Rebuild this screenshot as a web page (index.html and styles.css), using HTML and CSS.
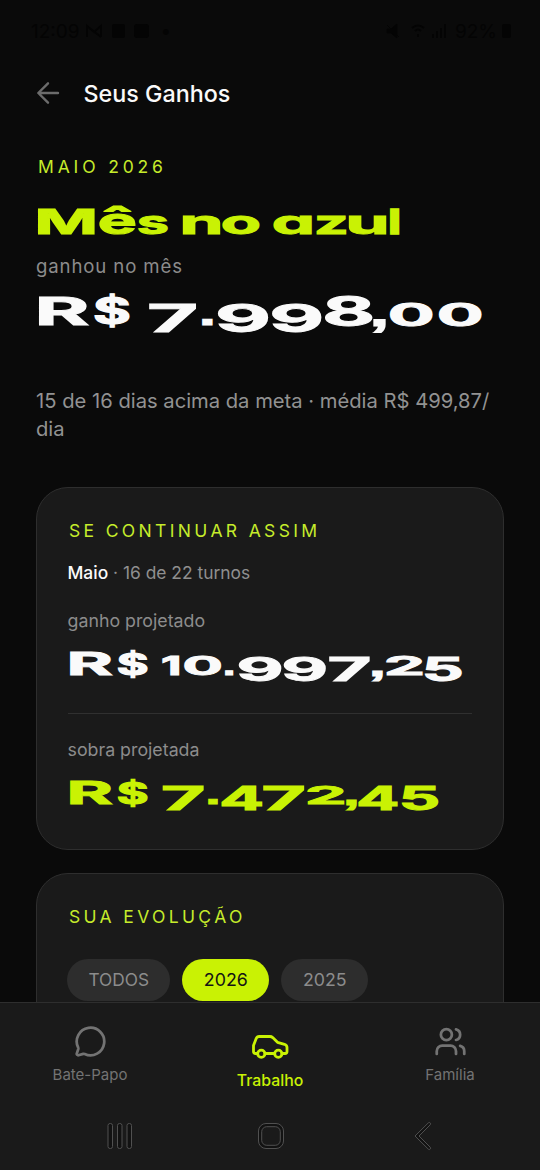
FILE: index.html
```html
<!DOCTYPE html>
<html lang="pt-BR">
<head>
<meta charset="utf-8">
<title>Seus Ganhos</title>
<link rel="stylesheet" href="styles.css">
</head>
<body>
<div class="app">
  <main class="content">
    <div class="status">
      <div class="status-group"><span>12:09</span>
        <svg width="66" height="16" viewBox="0 0 66 16"><path d="M2 14V3l7 6 7-6v11M2 3l14 11" fill="none" stroke="currentColor" stroke-width="2"/><rect x="27" y="1" width="13" height="14" rx="2"/><rect x="49" y="1" width="15" height="14" rx="3"/></svg>
        <span class="status-dot">•</span></div>
      <div class="status-group">
        <svg width="64" height="16" viewBox="0 0 64 16"><path d="M1 6h4l6-5v14l-6-5H1zM1 2l12 12" stroke="currentColor"/><path d="M26 5q6-5 12 0M29 8q3-3 6 0M32 11v3" fill="none" stroke="currentColor" stroke-width="2"/><path d="M46 11h2v4h-2zM50 8h2v7h-2zM54 5h2v10h-2zM58 1h2v14h-2z"/></svg>
        <span>92%</span>
        <svg width="9" height="14" viewBox="0 0 9 14"><rect width="9" height="14" rx="2"/></svg></div>
    </div>
    <header class="header">
      <svg class="back" width="24" height="24" viewBox="0 0 24 24"><path d="M22 12H2.500M12 2.300L2.300 12l9.700 9.700"/></svg>
      <h1>Seus Ganhos</h1>
    </header>
    <section class="summary">
      <p class="eyebrow first">MAIO 2026</p>
      <svg class="wide title" data-row="title" width="468" height="38"></svg>
      <p class="caption">ganhou no mês</p>
      <svg class="wide amount" data-row="amount" width="468" height="50"></svg>
      <p class="detail">15 de 16 dias acima da meta · média R$ 499,87/<br>dia</p>
    </section>
    <section class="card projection">
      <p class="eyebrow">SE CONTINUAR ASSIM</p>
      <p class="shifts"><b>Maio</b> · 16 de 22 turnos</p>
      <p class="label gain">ganho projetado</p>
      <svg class="wide figure" data-row="gain" width="404" height="40"></svg>
      <hr>
      <p class="label">sobra projetada</p>
      <svg class="wide figure lime" data-row="surplus" width="404" height="40"></svg>
    </section>
    <section class="card evolution">
      <p class="eyebrow">SUA EVOLUÇÃO</p>
      <div class="pills"><span class="pill todos">TODOS</span><span class="pill active">2026</span><span class="pill">2025</span></div>
    </section>
  </main>
  <nav class="bottom">
    <div class="tabs">
      <div class="tab"><svg width="33" height="33" viewBox="0 0 24 24"><path d="M2.992 16.342a2 2 0 0 1 .094 1.167l-1.065 3.29a1 1 0 0 0 1.236 1.168l3.413-.998a2 2 0 0 1 1.099.092 10 10 0 1 0-4.777-4.719"/></svg><span>Bate-Papo</span></div>
      <div class="tab on"><svg width="38" height="26" viewBox="0 0 38 26"><path d="M6.500 19.500H4.500Q2.500 19.500 2.500 17.500V11.500L5.200 4.500Q6 2.500 8.200 2.500H19Q20.500 2.500 21.700 3.600L26.500 8.300L33.500 10.300Q36 11.200 36 13.500V17.500Q36 19.500 34 19.500H31M14 19.500H23.500"/><circle cx="10.300" cy="19.700" r="3.600"/><circle cx="27.300" cy="19.700" r="3.600"/></svg><span>Trabalho</span></div>
      <div class="tab"><svg width="33" height="33" viewBox="0 0 24 24"><path d="M16 21v-2a4 4 0 0 0-4-4H6a4 4 0 0 0-4 4v2M22 21v-2a4 4 0 0 0-3-3.870M16 3.130a4 4 0 0 1 0 7.750"/><circle cx="9" cy="7" r="4"/></svg><span>Família</span></div>
    </div>
    <div class="system">
      <svg width="26" height="28" viewBox="0 0 26 28"><rect x="1" y="1.500" width="4.500" height="25" rx="2"/><rect x="10.500" y="1.500" width="4.500" height="25" rx="2"/><rect x="20" y="1.500" width="4.500" height="25" rx="2"/></svg>
      <svg width="28" height="28" viewBox="0 0 28 28"><rect x="1.500" y="1.500" width="25" height="25" rx="7.500"/><rect class="inner" x="4.700" y="4.700" width="18.600" height="18.600" rx="5"/></svg>
      <svg width="20" height="30" viewBox="0 0 20 30"><path d="M15.300 1.900L2 15l13.300 13.100q1 .9 1.900 0t0-1.900L6 15L17.200 3.800q.9-1 0-1.900t-1.900 0z"/></svg>
    </div>
  </nav>
</div>
<script src="wide.js"></script>
</body>
</html>
```
FILE: styles.css
```css
* { box-sizing: border-box; }
body { margin: 0; background: #0a0a0a; color: #fafafa; font-family: Inter, "Open Sans", sans-serif; }
p, h1, hr { margin: 0; }
svg { display: block; flex: none; }
.app { width: 540px; height: 1170px; display: flex; flex-direction: column; overflow: hidden; }
.content { height: 1002px; overflow: hidden; padding: 0 36px; flex: none; }
.status { height: 62px; margin: 0 -8px; display: flex; justify-content: space-between; align-items: center; color: #040404; font-size: 19px; padding: 0 1px 0 3px; }
.status svg { fill: currentColor; }
.status-group { display: flex; align-items: center; gap: 5px; }
.status-dot { margin-left: 5px; }
.header { height: 62px; display: flex; align-items: center; gap: 23.5px; }
.header h1 { font-size: 23.3px; font-weight: 500; line-height: 30px; padding-top: 1px; }
.back { fill: none; stroke: #6c6c6c; stroke-width: 2.4; stroke-linecap: round; stroke-linejoin: round; }
.eyebrow { color: #c6ec2b; font-size: 17.5px; line-height: 22px; letter-spacing: 3.35px; padding: 1px 0 0 1px; white-space: nowrap; }
.eyebrow.first { margin-top: 32px; padding: 0 0 0 2px; letter-spacing: 3.85px; }
.wide { fill: #fafafa; stroke: #fafafa; overflow: visible; }
.wide text { font: 700 100px Inter, sans-serif; stroke-width: 1.6px; vector-effect: non-scaling-stroke; }
.wide .point { font-family: "Liberation Sans", sans-serif; }
.title { margin-top: 24px; fill: #c9f204; stroke: #c9f204; }
.caption { margin-top: 14px; font-size: 18.6px; line-height: 24px; letter-spacing: .88px; color: #8c8c8c; }
.amount { margin-top: 10px; }
.detail { margin-top: 49px; font-size: 20.2px; line-height: 27.5px; color: #929292; white-space: nowrap; }
.card { background: #1a1a1a; border: 1px solid #2e2e2e; border-radius: 32px; padding: 31px 31px 0; }
.projection { margin-top: 45px; height: 362.5px; }
.evolution { margin-top: 23.5px; height: 300px; }
.shifts { margin: 19px 0 0 -.5px; font-size: 17.4px; line-height: 24px; color: #8f8f8f; }
.shifts b { font-weight: 500; color: #fafafa; }
.label { margin: 24px 0 0 -.5px; font-size: 17.8px; line-height: 24px; color: #8c8c8c; }
.figure { margin-top: 13px; }
.lime { fill: #c9f204; stroke: #c9f204; margin-top: 14px; }
hr { border: 0; height: 1px; background: #303030; margin-top: 27px; }
.pills { display: flex; gap: 12px; margin: 30.5px 0 0 -.7px; }
.pill { width: 87px; height: 42px; line-height: 42px; text-align: center; border-radius: 21px; background: #2d2d2d; color: #8c8c8c; font-size: 17.8px; }
.todos { width: 103px; font-size: 17.3px; }
.active { background: #c9f204; color: #141414; }
.bottom { height: 168px; background: #1a1a1a; border-top: 1px solid #2e2e2e; }
.tabs { display: flex; height: 100px; }
.tab { width: 180px; display: flex; flex-direction: column; align-items: center; padding-top: 22px; gap: 6px; color: #737373; font-size: 15px; line-height: 21px; }
.tab svg { fill: none; stroke: currentColor; stroke-width: 2; stroke-linecap: round; stroke-linejoin: round; }
.tab.on { color: #c9f204; padding-top: 31px; gap: 10px; font-size: 15.8px; font-weight: 500; }
.tab.on svg { stroke-width: 2.8; }
.system { display: flex; align-items: center; height: 66px; padding-left: 107px; }
.system svg { fill: #121212; stroke: #505050; stroke-width: 1; }
.system .inner { fill: #1a1a1a; }
.system svg:nth-child(2) { margin-left: 124px; }
.system svg:nth-child(3) { margin-left: 128px; }
```
FILE: wide.js
```js
// Extended display lettering: every glyph is stretched to its own box
// [character, left, right, top, bottom]; a null entry is a word space.
const rows = {
  title: [['M',2,59,6,32.5],['ê',63,99.5,2,33],['s',102,132,12.5,33],null,['n',147,184,12.5,32.5],['o',186,223.5,12.5,33],null,['a',237,276,12.5,33],['z',280,310,13,32.5],['u',313,350,13,33],['l',354,363.5,5.500,32.5]],
  amount: [['R',3,53,8,37.5],['$',58,94,5,41],null,['7',113,160,15,44.5],['.',166,177,30,37.5],['9',181,232.5,14,45],['9',235,285.5,14,45],['8',288,336.5,7,39.5],[',',337,350,30,45],['0',353,397,13.500,39],['0',402,446,13.500,39]],
  gain: [['R',2,44.5,5,30],['$',49.5,80,3,33],null,['1',94,111.5,10,30],['0',115.5,153.5,9.500,30.5],['.',157,165.5,24,30],['9',170,213.5,9.500,36],['9',215,258,9.500,36],['7',261,301.5,10,36],[',',304,315,24,36],['2',318,354.5,9.500,30],['5',357,393.500,10,36.5]],
  surplus: [['R',2,44.5,4,29],['$',49.5,80,2,32],null,['7',94.5,135.5,9.500,35],['.',140,150,22.500,29],['4',153.5,194.5,9.500,35],['7',195,236,9.500,35],['2',239,276,9,29],[',',278,289,23,35],['4',290.500,330,9.500,35],['5',334,370,9.500,35.5]]
};
const NS = 'http://www.w3.org/2000/svg';
const OUTLINE = 0.8;
const ctx = document.createElement('canvas').getContext('2d');
for (const svg of document.querySelectorAll('.wide')) {
  for (const g of rows[svg.dataset.row]) {
    if (!g) { svg.append(' '); continue; }
    const ch = g[0], point = ch === '.' || ch === ',';
    const l = g[1] + OUTLINE, r = g[2] - OUTLINE, t = g[3] + OUTLINE, b = g[4] - OUTLINE;
    ctx.font = point ? '700 1000px "Liberation Sans"' : '700 1000px Inter';
    const m = ctx.measureText(ch === 'a' ? 'o' : ch);
    const x0 = -m.actualBoundingBoxLeft / 10, x1 = m.actualBoundingBoxRight / 10;
    const y0 = -m.actualBoundingBoxAscent / 10, y1 = m.actualBoundingBoxDescent / 10;
    const sx = (r - l) / (x1 - x0), sy = (b - t) / (y1 - y0);
    const el = document.createElementNS(NS, 'text');
    el.textContent = ch;
    if (point) el.setAttribute('class', 'point');
    if (ch === 'a') el.style.fontFeatureSettings = '"cv11"';
    el.setAttribute('transform', `matrix(${sx} 0 0 ${sy} ${l - x0 * sx} ${t - y0 * sy})`);
    svg.append(el);
  }
}
```
